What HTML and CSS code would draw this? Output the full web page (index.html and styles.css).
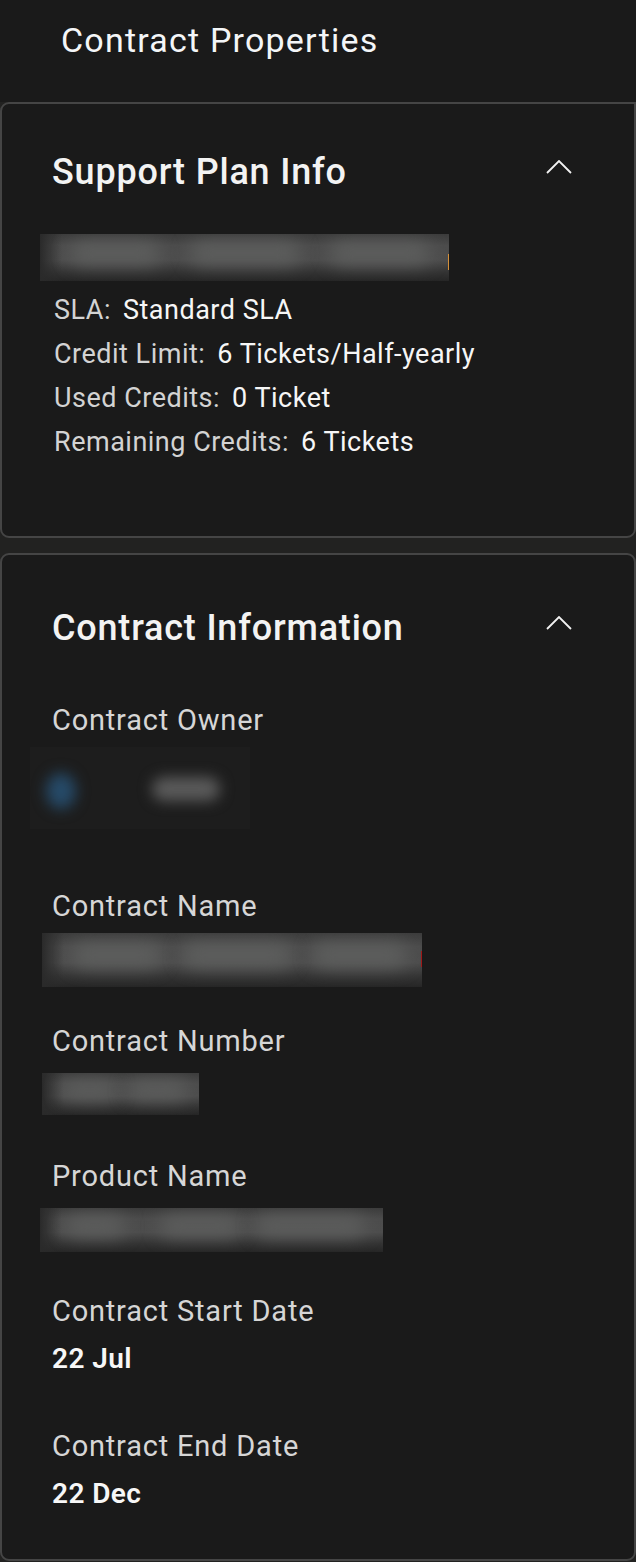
FILE: index.html
```html
<!DOCTYPE html>
<html lang="en">
<head>
<meta charset="utf-8">
<title>Contract Properties</title>
<link rel="stylesheet" href="styles.css">
</head>
<body>
<div class="page">
  <header class="top">
    <h1 class="top-title">Contract Properties</h1>
  </header>
  <div class="cards">
    <section class="card card-plan">
      <div class="card-head">
        <h2 class="card-title">Support Plan Info</h2>
        <svg class="chev" width="26" height="14" viewBox="0 0 26 14"><polyline points="1,13 13,1 25,13" fill="none" stroke="#f2f2f2" stroke-width="1.8"/></svg>
      </div>
      <div class="redact redact-plan"><span class="blob b1"></span><span class="blob b2"></span><span class="blob b3"></span><span class="peek peek-orange"></span></div>
      <ul class="plan-list">
        <li><span class="k">SLA:</span><span class="v">Standard SLA</span></li>
        <li><span class="k">Credit Limit:</span><span class="v">6 Tickets/Half-yearly</span></li>
        <li><span class="k">Used Credits:</span><span class="v">0 Ticket</span></li>
        <li><span class="k">Remaining Credits:</span><span class="v">6 Tickets</span></li>
      </ul>
    </section>
    <section class="card card-info">
      <div class="card-head">
        <h2 class="card-title">Contract Information</h2>
        <svg class="chev" width="26" height="14" viewBox="0 0 26 14"><polyline points="1,13 13,1 25,13" fill="none" stroke="#f2f2f2" stroke-width="1.8"/></svg>
      </div>
      <div class="fields">
        <div class="field field-owner">
          <div class="label">Contract Owner</div>
          <div class="owner"><span class="avatar"></span><span class="owner-name"></span></div>
        </div>
        <div class="field">
          <div class="label">Contract Name</div>
          <div class="redact redact-name"><span class="blob b1"></span><span class="blob b2"></span><span class="blob b3"></span><span class="peek peek-red"></span></div>
        </div>
        <div class="field">
          <div class="label">Contract Number</div>
          <div class="redact redact-number"><span class="blob b1"></span><span class="blob b2"></span></div>
        </div>
        <div class="field">
          <div class="label">Product Name</div>
          <div class="redact redact-product"><span class="blob b1"></span><span class="blob b2"></span><span class="blob b3"></span></div>
        </div>
        <div class="field">
          <div class="label">Contract Start Date</div>
          <div class="value">22 Jul</div>
        </div>
        <div class="field field-last">
          <div class="label">Contract End Date</div>
          <div class="value">22 Dec</div>
        </div>
      </div>
    </section>
  </div>
</div>
</body>
</html>
```

FILE: styles.css
```css
* { box-sizing: border-box; }
html, body { margin: 0; padding: 0; }
body {
  background: #222221;
  font-family: Roboto, "Liberation Sans", sans-serif;
  color: #f2f2f2;
}
.page { width: 636px; }
.top {
  background: #1a1a1a;
  height: 102px;
  padding: 18px 0 0 61px;
}
.top-title {
  margin: 0;
  font-size: 34px;
  line-height: 44px;
  font-weight: 400;
  letter-spacing: 1.2px;
  color: #f4f6f8;
}
.cards {
  display: flex;
  flex-direction: column;
  gap: 15px;
}
.card {
  background: #1a1a1a;
  border: 2px solid #454545;
  border-radius: 9px;
}
.card-plan {
  border-top-right-radius: 0;
  padding: 46px 0 72px 0;
}
.card-info {
  padding: 51px 0 0 0;
  height: 1008px;
}
.card-head {
  display: flex;
  align-items: center;
  justify-content: space-between;
  padding: 0 62px 0 50px;
  height: 44px;
}
.card-title {
  margin: 0;
  font-size: 36px;
  line-height: 44px;
  font-weight: 500;
  letter-spacing: 0.8px;
  color: #f3f3f3;
}
.chev { display: block; margin-top: -10px; }

.redact {
  position: relative;
  overflow: hidden;
  background: linear-gradient(180deg, #3c3c3c 0%, #4c4c4c 25%, #4d4d4d 55%, #333 82%, #262626 100%);
}
.blob {
  position: absolute;
  top: 18%;
  height: 45%;
  border-radius: 12px;
  background: #5e5f5e;
  filter: blur(9px);
}
.redact::before {
  content: "";
  position: absolute;
  left: 0; top: 0; bottom: 0;
  width: 22px;
  background: linear-gradient(90deg, #2a2a2a, rgba(42,42,42,0));
}
.redact-plan { width: 409px; height: 47px; margin: 40px 0 0 38px; }
.redact-plan .b1 { left: 30px; width: 90px; }
.redact-plan .b2 { left: 150px; width: 110px; }
.redact-plan .b3 { left: 290px; width: 100px; }
.peek { position: absolute; width: 2px; }
.peek-orange { right: -1px; top: 20px; height: 16px; background: #d4903a; }
.peek-red { right: -1px; top: 18px; height: 16px; background: #a01818; }

.plan-list {
  list-style: none;
  margin: 7px 0 0 0;
  padding: 0 0 0 52px;
}
.plan-list li {
  font-size: 27px;
  line-height: 44px;
  letter-spacing: 0.5px;
  white-space: nowrap;
}
.plan-list .k { color: #d3d3d3; margin-right: 12px; }
.plan-list .v { color: #f6f6f6; }

.fields {
  margin-top: 52px;
  padding-left: 50px;
}
.field { height: 135px; }
.field-owner { height: 186px; }
.label {
  font-size: 29px;
  line-height: 36px;
  letter-spacing: 0.8px;
  color: #d6d6d6;
}
.value {
  margin-top: 12px;
  font-size: 28px;
  line-height: 36px;
  font-weight: 600;
  letter-spacing: 0.4px;
  color: #f7f7f7;
}
.owner {
  position: relative;
  margin: 9px 0 0 -22px;
  width: 220px;
  height: 82px;
  background: #1d1d1d;
  overflow: hidden;
}
.avatar {
  position: absolute;
  left: 16px; top: 26px;
  width: 30px; height: 36px;
  border-radius: 50%;
  background: #264a68;
  filter: blur(7px);
}
.owner-name {
  position: absolute;
  left: 122px; top: 30px;
  width: 68px; height: 24px;
  border-radius: 12px;
  background: #5a5a5a;
  filter: blur(7px);
}
.redact-name { width: 380px; height: 54px; margin: 9px 0 0 -10px; }
.redact-name .b1 { left: 30px; width: 90px; }
.redact-name .b2 { left: 140px; width: 110px; }
.redact-name .b3 { left: 270px; width: 95px; }
.redact-number { width: 157px; height: 42px; margin: 14px 0 0 -10px; }
.redact-number .b1 { left: 20px; width: 55px; }
.redact-number .b2 { left: 85px; width: 60px; }
.redact-product { width: 343px; height: 44px; margin: 14px 0 0 -12px; }
.redact-product .b1 { left: 25px; width: 60px; }
.redact-product .b2 { left: 120px; width: 80px; }
.redact-product .b3 { left: 215px; width: 110px; }
```
